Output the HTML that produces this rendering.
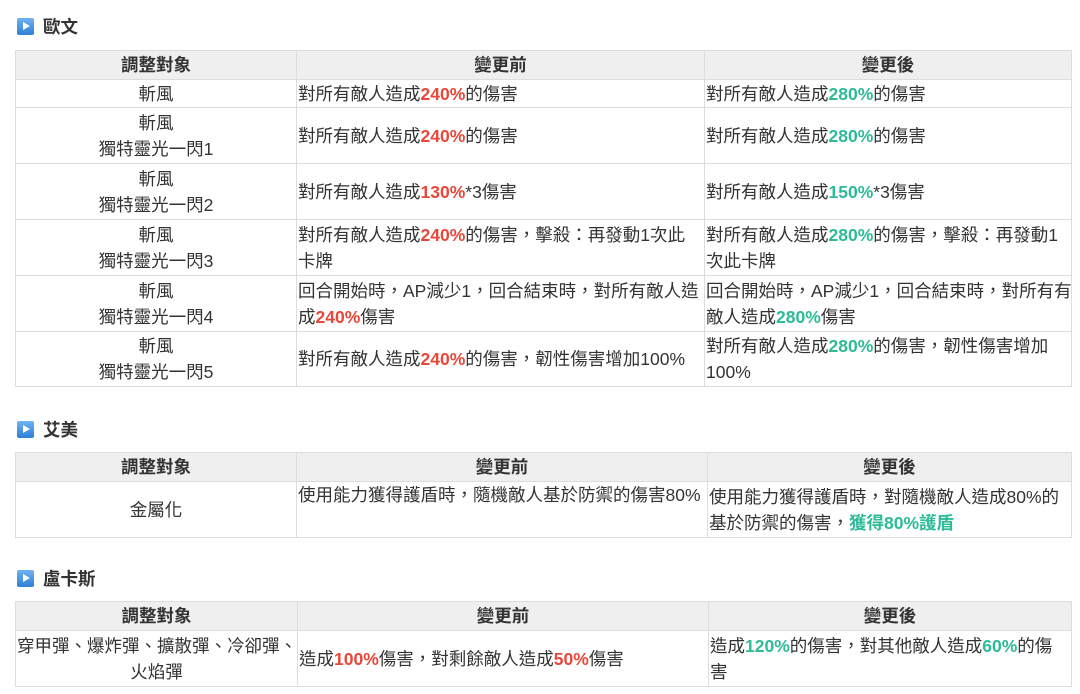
<!DOCTYPE html>
<html><head><meta charset="utf-8"><style>
*{margin:0;padding:0;box-sizing:border-box}
body{width:1080px;height:694px;background:#fff;position:relative;overflow:hidden;font-family:"Liberation Sans","Noto Sans CJK TC",sans-serif;color:#333;font-size:17.5px}
.h{position:absolute;left:17px;height:18px;display:flex;align-items:center;font-weight:bold;font-size:17.5px;color:#333}
.h i{display:inline-block;width:17px;height:17px;background:linear-gradient(#6fb3f0,#2f7fd6);border-radius:2px;margin-right:9px;position:relative}
.h i:after{content:"";position:absolute;left:6px;top:4px;border-left:7px solid #fff;border-top:4.5px solid transparent;border-bottom:4.5px solid transparent}
table{position:absolute;left:15px;width:1057px;border-collapse:collapse;table-layout:fixed}
td,th{border:1px solid #ddd;line-height:26px;padding:0 1px;vertical-align:middle;white-space:nowrap;overflow:hidden}
th{background:#efefef;height:29px;font-weight:bold;text-align:center}
td.c{text-align:center}
.r{color:#e8473a;font-weight:bold}
.g{color:#2dbb98;font-weight:bold}
</style></head><body>
<div class="h" style="top:17px"><i></i>歐文</div>
<table style="top:50px">
<col style="width:281px"><col style="width:408px"><col>
<tr><th>調整對象</th><th>變更前</th><th>變更後</th></tr>
<tr style="height:28px"><td class="c">斬風</td><td>對所有敵人造成<span class="r">240%</span>的傷害</td><td>對所有敵人造成<span class="g">280%</span>的傷害</td></tr>
<tr style="height:56px"><td class="c">斬風<br>獨特靈光一閃1</td><td>對所有敵人造成<span class="r">240%</span>的傷害</td><td>對所有敵人造成<span class="g">280%</span>的傷害</td></tr>
<tr style="height:56px"><td class="c">斬風<br>獨特靈光一閃2</td><td>對所有敵人造成<span class="r">130%</span>*3傷害</td><td>對所有敵人造成<span class="g">150%</span>*3傷害</td></tr>
<tr style="height:56px"><td class="c">斬風<br>獨特靈光一閃3</td><td>對所有敵人造成<span class="r">240%</span>的傷害，擊殺：再發動1次此<br>卡牌</td><td>對所有敵人造成<span class="g">280%</span>的傷害，擊殺：再發動1<br>次此卡牌</td></tr>
<tr style="height:56px"><td class="c">斬風<br>獨特靈光一閃4</td><td>回合開始時，AP減少1，回合結束時，對所有敵人造<br>成<span class="r">240%</span>傷害</td><td>回合開始時，AP減少1，回合結束時，對所有有<br>敵人造成<span class="g">280%</span>傷害</td></tr>
<tr style="height:55px"><td class="c">斬風<br>獨特靈光一閃5</td><td>對所有敵人造成<span class="r">240%</span>的傷害，韌性傷害增加100%</td><td>對所有敵人造成<span class="g">280%</span>的傷害，韌性傷害增加<br>100%</td></tr>
</table>
<div class="h" style="top:420px"><i></i>艾美</div>
<table style="top:452px">
<col style="width:281px"><col style="width:411px"><col>
<tr><th style="height:28px">調整對象</th><th>變更前</th><th>變更後</th></tr>
<tr style="height:56px"><td class="c">金屬化</td><td style="vertical-align:top">使用能力獲得護盾時，隨機敵人基於防禦的傷害80%</td><td>使用能力獲得護盾時，對隨機敵人造成80%的<br>基於防禦的傷害，<span class="g">獲得80%護盾</span></td></tr>
</table>
<div class="h" style="top:569px"><i></i>盧卡斯</div>
<table style="top:601px">
<col style="width:282px"><col style="width:411px"><col>
<tr><th>調整對象</th><th>變更前</th><th>變更後</th></tr>
<tr style="height:56px"><td class="c">穿甲彈、爆炸彈、擴散彈、冷卻彈、<br>火焰彈</td><td>造成<span class="r">100%</span>傷害，對剩餘敵人造成<span class="r">50%</span>傷害</td><td>造成<span class="g">120%</span>的傷害，對其他敵人造成<span class="g">60%</span>的傷<br>害</td></tr>
</table>
</body></html>
